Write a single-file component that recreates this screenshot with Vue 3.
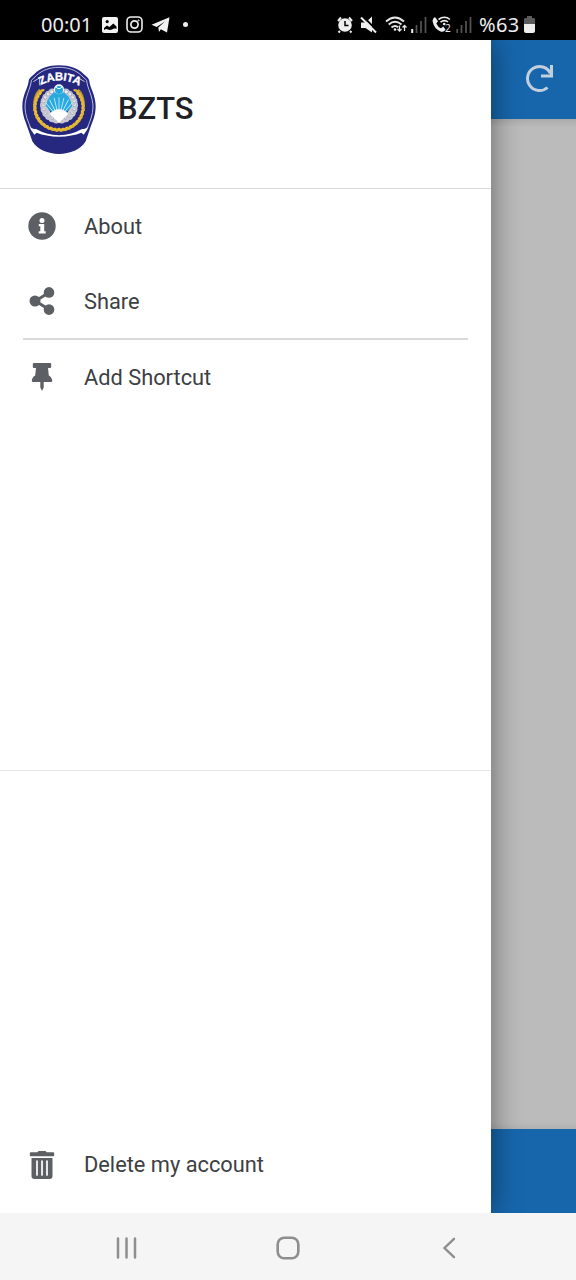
<script setup>
const mainItems = [
  { id: 'info', label: 'About' },
  { id: 'share', label: 'Share' },
]
const leaves = []
for (let i = 0; i < 14; i++) {
  const deg = 95 + i * 9.8
  const a = (deg * Math.PI) / 180
  leaves.push({ x: 147 + 75 * Math.cos(a), y: 156 + 71 * Math.sin(a), r: deg })
}
const petals = []
for (let i = 0; i < 10; i++) {
  const a = ((100 + i * 16) * Math.PI) / 180
  petals.push({ x: 147 + 45 * Math.cos(a), y: 151 + 43 * Math.sin(a) })
}
const rays = [-54, -36, -18, 0, 18, 36, 54]
</script>

<template>
  <div class="screen">
    <header class="status">
      <div class="left">
        <span class="time">00:01</span>
        <svg class="gallery" width="16" height="16" viewBox="0 0 16 16"><rect width="16" height="16" rx="2" fill="#f2f2f2" /><circle cx="5.2" cy="4.6" r="1.6" fill="#000" /><path d="M2 11l3-2.500 2.400 1.600L11.300 6.500 14.500 9.500v2.500c-3-1.500-4 1-6.500 1S5 11 2 13z" fill="#000" /></svg>
        <svg class="insta" width="17" height="17" viewBox="0 0 17 17" fill="none" stroke="#eee"><rect x="1" y="1" width="15" height="15" rx="4" stroke-width="1.600" /><circle cx="8.500" cy="8.500" r="3.600" stroke-width="1.700" /><circle cx="12.600" cy="4.400" r=".6" /></svg>
        <svg class="plane" width="19" height="16" viewBox="0 0 19 16"><path d="M.5 7.700L18.500 0.300 16 15.500 9.800 12.200 8 15l-.7-4.500 7-6.300-8.600 5.700z" fill="#f2f2f2" /></svg>
        <span class="dot"></span>
      </div>
      <div class="right">
        <svg class="alarm" width="16" height="18" viewBox="0 0 16 18"><circle cx="8" cy="9" r="6.800" fill="#eee" /><path d="M1 5l3-3.500M15 5l-3-3.500M3 15l-1.500 1.500M13 15l1.500 1.500" stroke="#eee" stroke-width="2" /><path d="M8 5v4.500h3.500" fill="none" stroke="#000" stroke-width="1.500" /></svg>
        <svg class="mute" width="17" height="18" viewBox="0 0 17 18"><path d="M1 6.500h4.500L12 .5v16L5.500 12H1z" fill="#eee" /><path d="M2.500 0l14.500 14.500" stroke="#000" stroke-width="2" /><path d="M1 1.500l15 15" stroke="#eee" stroke-width="2" /></svg>
        <svg class="wifi" width="23" height="17" viewBox="0 0 23 17" fill="none" stroke="#e6e6e6" stroke-width="1.900"><path d="M1 5.500Q10 -2.500 19 5.500M3.700 8.500Q10 3 16.500 8.500M6.500 11.500Q10 8.500 13.200 11.200" /><circle cx="10" cy="13.500" r="1.300" fill="#eee" stroke="none" /><path d="M14.500 9.500v5.500m-2-2l2 2 2-2M19.500 15v-5.500m-2 2l2-2 2 2" stroke-width="1.300" /></svg>
        <svg class="signal" width="16" height="16" viewBox="0 0 16 16"><path d="M1.200 12v4" stroke="#eee" stroke-width="2" /><path d="M5.500 8v8M10 4v12M14.500 0v16" stroke="#555" stroke-width="1.700" /></svg>
        <div class="call">
          <svg width="20" height="17" viewBox="0 0 20 17"><path d="M3 1L6 5.300 4.300 7.500Q6 11.300 9 12.200L11.300 10.500 13.500 13.500Q12 16.500 9 15.700 2 13 .5 5 .5 2.500 3 1z" fill="#eee" /><path d="M6.500 3.500Q12.500-1 18 3.500M8.500 6.200Q12.500 3 16 6" fill="none" stroke="#eee" stroke-width="1.600" /><circle cx="12.200" cy="8" r="1.300" fill="#eee" /></svg>
          <span class="sim">2</span>
        </div>
        <svg class="signal2" width="16" height="16" viewBox="0 0 16 16"><path d="M1.200 12v4M5.500 8v8M10 4v12M14.500 0v16" stroke="#555" stroke-width="1.700" /></svg>
        <span class="percent">%63</span>
        <svg class="battery" width="11" height="17" viewBox="0 0 11 17"><path d="M3 2V0h5v2h2l1 1v5H0V3l1-1z" fill="#5b5b5b" /><path d="M0 8h11v7q0 2-2 2H2q-2 0-2-2z" fill="#eee" /></svg>
      </div>
    </header>

    <main class="stage">
      <section class="page">
        <div class="toolbar">
          <svg width="30" height="30" viewBox="0 0 30 30" fill="none" stroke="#c2cfdd" stroke-width="3"><path d="M22.500 23.500A12 12 0 1 1 25.300 9.300" /><path d="M26.500 1v11H16" /></svg>
        </div>
        <div class="content"></div>
        <div class="tabbar"></div>
      </section>

      <aside class="drawer">
        <div class="brand">
          <svg class="badge" width="74" height="90" viewBox="36 30 222 270">
            <path d="M147 31C178 31 205 41 221 57C227 64 236 67 238 78C239 96 257 120 257 154C257 184 246 202 239 224L227 259C212 284 180 297 147 297S82 284 67 259L55 224C48 202 37 184 37 154C37 120 55 96 56 78C58 67 67 64 73 57C89 41 116 31 147 31Z" fill="#25287e" />
            <path d="M147 37C176 37 198 46 214 61L230 76C231 98 249 124 249 156C249 178 240 200 232 218M62 218C54 200 45 178 45 156C45 124 63 98 64 76L80 61C96 46 118 37 147 37" fill="none" stroke="#d9dcf0" stroke-width="2.500" />
            <path d="M70 80L90 68Q86 84 90 92M224 80L204 68Q208 84 204 92" fill="none" stroke="#e4e5f5" stroke-width="2.500" />
            <path id="badge-arc" d="M91 91Q147 61 205 91" fill="none" />
            <text class="badge-text" fill="#fff" stroke="#fff" stroke-width="1"><textPath href="#badge-arc" textLength="120" lengthAdjust="spacingAndGlyphs" startOffset="2">ZABITA</textPath></text>
            <g v-for="side in [1, -1]" :key="side" :transform="side === -1 ? 'translate(294 0) scale(-1 1)' : undefined">
              <path d="M145 227Q72 217 73 146Q74 119 90 104" fill="none" stroke="#b99334" stroke-width="7" />
              <g v-for="leaf in leaves" :key="leaf.r" :transform="`translate(${leaf.x} ${leaf.y}) rotate(${leaf.r})`">
                <ellipse cx="-5" cy="0" rx="8" ry="4" transform="rotate(55)" fill="#e8bd36" />
                <ellipse cx="5" cy="0" rx="8" ry="4" transform="rotate(120)" fill="#dcb033" />
              </g>
              <path d="M57 212Q65 222 78 222Q108 239 147 241V245Q108 244 80 233L73 239Q62 226 57 212Z" fill="#fff" />
              <g v-for="petal in petals" :key="petal.y">
                <circle :cx="petal.x" :cy="petal.y" r="12" fill="#c9cbd3" />
                <circle :cx="petal.x - 2" :cy="petal.y - 2" r="6" fill="#f0f0f4" stroke="#9699ac" stroke-width="2" />
              </g>
            </g>
            <path d="M147 196L107 153Q116 113 147 108Q178 113 187 153Z" fill="#28a9df" />
            <path v-for="ray in rays" :key="ray" d="M147 190V127" stroke="#c7edf9" stroke-width="2.500" :transform="`rotate(${ray * 0.75} 147 190)`" />
            <path d="M147 203L119 177Q130 163 147 163T175 177Z" fill="#fff" />
            <circle cx="147" cy="103" r="15" fill="#fff" /><circle cx="147" cy="105" r="12" fill="#23a8e0" /><path d="M138 96Q147 106 156 96" fill="none" stroke="#fff" stroke-width="3" />
          </svg>
          <h1>BZTS</h1>
        </div>

        <nav class="menu">
          <a v-for="item in mainItems" :key="item.id" class="row">
            <svg v-if="item.id === 'info'" width="28" height="28" viewBox="0 0 28 28"><circle cx="14" cy="14" r="13.700" fill="#5c5f63" /><circle cx="14" cy="8.400" r="2.500" fill="#fff" /><path d="M10.800 12h5.400v7.200h1.500v2.300h-7v-2.300h1.600v-4.900h-1.500z" fill="#fff" /></svg>
            <svg v-else width="28" height="28" viewBox="0 0 28 28" fill="#5c5f63"><path d="M21 5.500L7.500 14 21 22.500" fill="none" stroke="#5c5f63" stroke-width="3" /><circle cx="21" cy="5.400" r="5.300" /><circle cx="7" cy="14" r="5.500" /><circle cx="21" cy="22.600" r="5.300" /></svg>
            <span>{{ item.label }}</span>
          </a>
        </nav>
        <div class="divider"></div>
        <a class="row shortcut">
          <svg width="28" height="28" viewBox="0 0 28 28" fill="#5c5f63"><path d="M6 0h16q1.200 0 1.200 1.200v2.600Q23.200 5 22 5h-2l.8 7.500Q24.200 14.500 24.200 18 24.200 19 23 19h-7.300v5.500L14 28l-1.700-3.500V19H5q-1.200 0-1.200-1 0-3.500 3.400-5.500L8 5H6Q4.800 5 4.800 3.800V1.200Q4.800 0 6 0z" /></svg>
          <span>Add Shortcut</span>
        </a>
        <div class="account">
          <a class="row">
            <svg width="28" height="28" viewBox="0 0 28 28"><path d="M2.800 1.300h6.500L10.600 0h6.800l1.300 1.300h6.500q1 0 1 1v2.200q0 .8-1 .8H2.800q-1 0-1-.8V2.300q0-1 1-1zM3.500 7h21v18q0 3-3 3h-15q-3 0-3-3z" fill="#5c5f63" /><path d="M9 10v14M14 10v14M19 10v14" stroke="#fff" stroke-width="1.700" stroke-linecap="round" /></svg>
            <span>Delete my account</span>
          </a>
        </div>
      </aside>
    </main>

    <footer class="nav">
      <div><svg width="22" height="22" viewBox="0 0 22 22"><path d="M2 1.500v19M10.500 1.500v19M19 1.500v19" stroke="#8e8e8e" stroke-width="2.500" stroke-linecap="round" /></svg></div>
      <div><svg width="24" height="24" viewBox="0 0 24 24"><rect x="1.700" y="1.700" width="20.600" height="20.600" rx="6.500" fill="none" stroke="#8e8e8e" stroke-width="2.600" /></svg></div>
      <div><svg width="14" height="22" viewBox="0 0 14 22"><path d="M12 1.800L2.500 11l9.500 9.200" fill="none" stroke="#8e8e8e" stroke-width="2.400" stroke-linecap="round" /></svg></div>
    </footer>
  </div>
</template>

<style>
body { margin: 0; }
</style>

<style scoped>
.screen { width: 576px; height: 1280px; display: flex; flex-direction: column; overflow: hidden; background: #fff; font-family: Roboto, sans-serif; }
svg { display: block; flex-shrink: 0; }
.status { height: 40px; flex-shrink: 0; box-sizing: border-box; padding: 9px 41px 0; background: #000; color: #eee; display: flex; justify-content: space-between; font: 20px/31px "Noto Sans", sans-serif; }
.left, .right { display: flex; align-items: center; height: 31px; }
.time { width: 51px; }
.gallery { margin-left: 10px; }
.insta { margin-left: 8px; }
.plane { margin-left: 8px; }
.dot { width: 5px; height: 5px; border-radius: 50%; background: #eee; margin-left: 13px; }
.mute { margin-left: 7px; }
.wifi { margin-left: 8px; }
.signal { margin-left: 3px; }
.call { position: relative; width: 20px; height: 17px; margin-left: 5px; }
.sim { position: absolute; left: 13px; top: 5px; font: 10px/14px "Noto Sans", sans-serif; }
.signal2 { margin-left: 4px; }
.percent { width: 41px; margin-left: 7px; letter-spacing: .3px; }
.battery { margin-left: 4px; }
.stage { height: 1173px; display: grid; grid-template-columns: 491px 85px; overflow: hidden; }
.page { grid-column: 2; grid-row: 1; display: flex; flex-direction: column; }
.toolbar { height: 79px; box-sizing: border-box; padding: 24px 0 0 34px; background: #1766ac; }
.content { flex: 1; background: linear-gradient(#a9aaa9 0, #babbba 8px, #babbba calc(100% - 7px), #b0b1b0 100%); }
.tabbar { height: 84px; background: #1766ac; }
.drawer { grid-column: 1; grid-row: 1; z-index: 1; display: flex; flex-direction: column; background: #fff; box-shadow: 0 0 28px rgba(0, 0, 0, .48); }
.brand { height: 149px; box-sizing: border-box; border-bottom: 1px solid #d8d8d8; padding: 25px 22px; display: flex; align-items: flex-start; gap: 22px; }
.badge-text { font: bold 34px "Liberation Sans", sans-serif; }
h1 { margin: 26px 0 0; font-size: 30.900px; line-height: 36px; font-weight: 500; color: #202124; }
.row { display: flex; align-items: center; gap: 28px; height: 75px; padding-left: 28px; box-sizing: border-box; color: #3c4043; font-size: 21.800px; }
.menu svg { margin-top: -2px; }
.divider { height: 2px; background: #dadada; margin: -1px 23px 0; flex-shrink: 0; }
.shortcut { height: 73px; }
.shortcut span { padding-top: 1px; }
.account { margin-top: 357px; flex: 1; border-top: 1px solid #e7e7e7; display: flex; align-items: flex-end; padding-bottom: 11px; }
.nav { height: 67px; background: #f5f5f5; display: grid; grid-template-columns: 207px 161px 208px; align-items: center; }
.nav div { display: flex; justify-content: center; padding-top: 2px; }
.nav div:first-child { padding-left: 46px; }
.nav div:last-child { padding-right: 46px; }
</style>
